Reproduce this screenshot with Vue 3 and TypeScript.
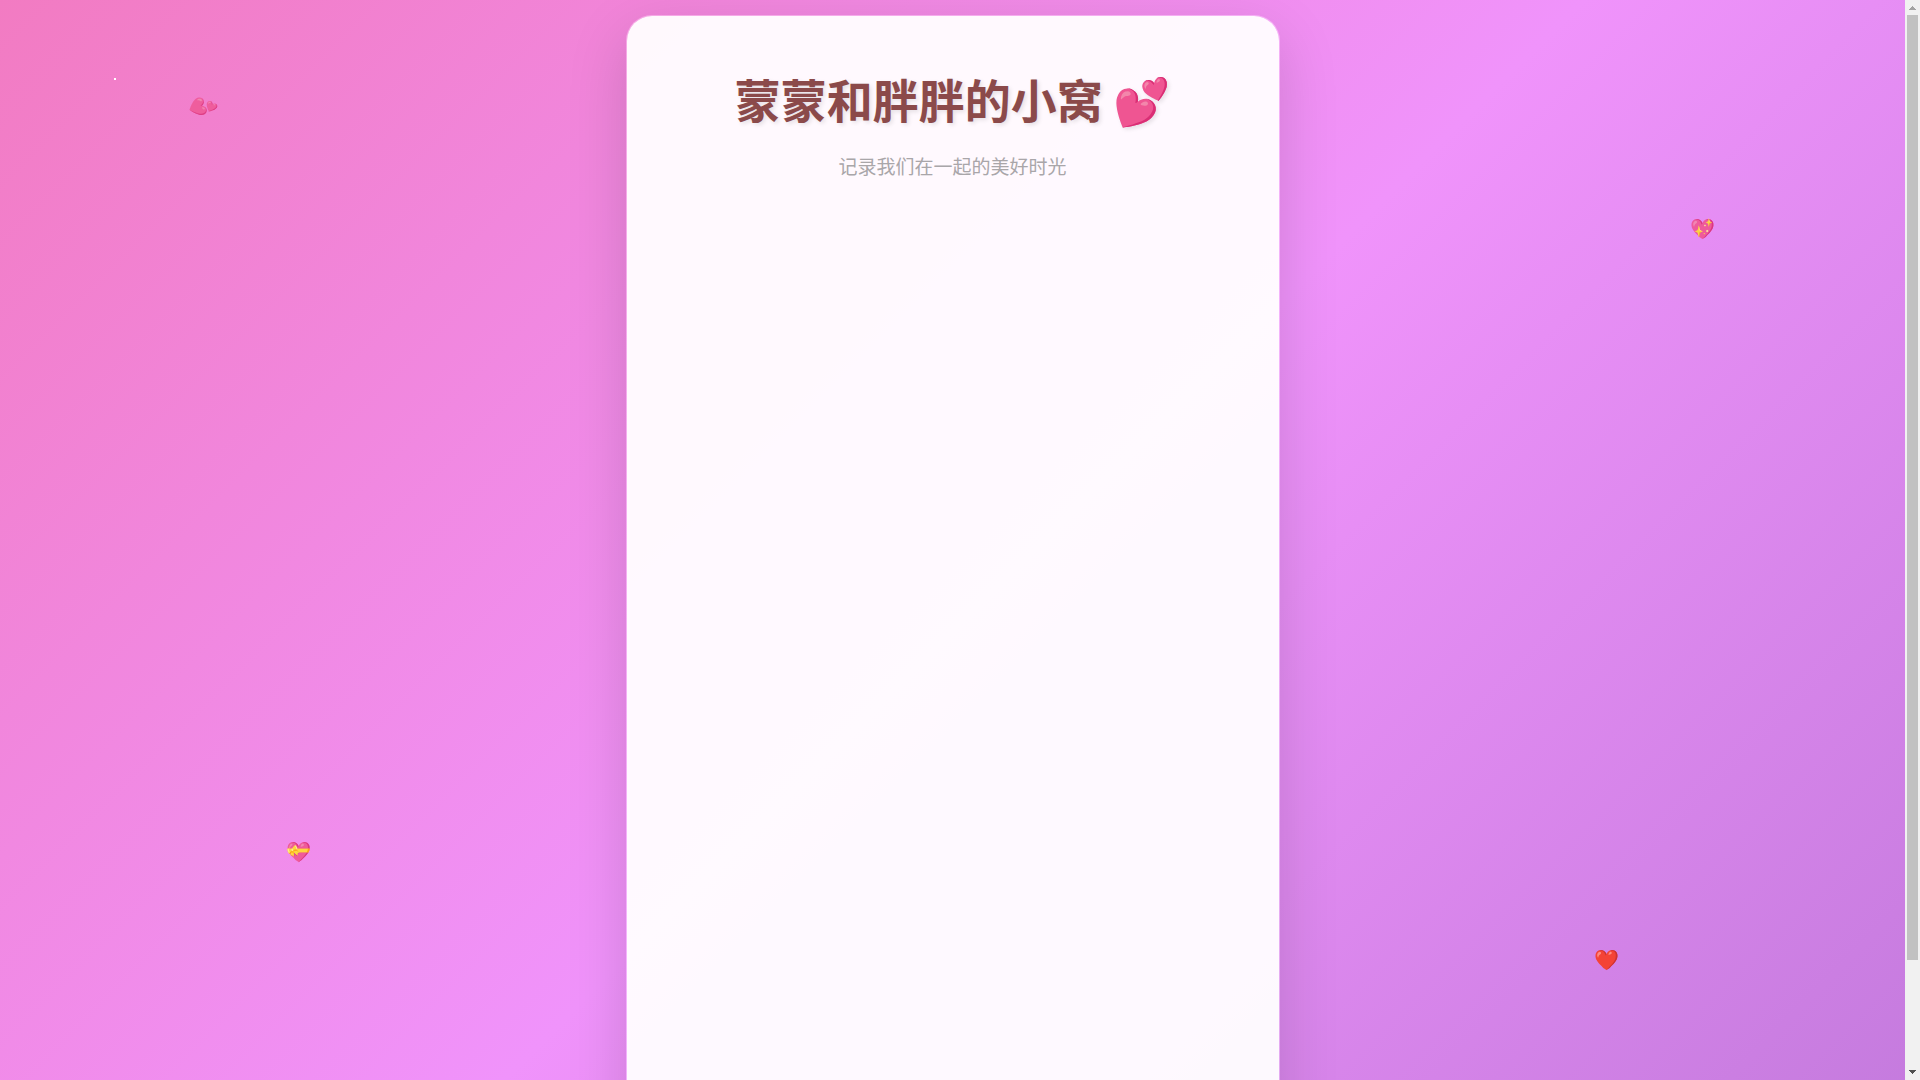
<script setup lang="ts">
interface FloatingHeart {
  symbol: string
  left: number
  top: number
  turn: number
  opacity: number
}

const hearts: FloatingHeart[] = [
  { symbol: '💕', left: 10, top: 8.7, turn: 41, opacity: 0.8 },
  { symbol: '💖', left: 88.7, top: 20, turn: 0, opacity: 0.9 },
  { symbol: '💝', left: 15, top: 77.7, turn: 0, opacity: 0.9 },
  { symbol: '❤️', left: 83.7, top: 87.7, turn: 0, opacity: 1 },
]
</script>

<template>
  <div class="viewport">
    <div class="scene">
      <main class="card">
        <header class="header">
          <h1 class="title">蒙蒙和胖胖的小窝 💕</h1>
          <p class="subtitle">记录我们在一起的美好时光</p>
        </header>
      </main>
      <div class="decor" aria-hidden="true">
        <span class="spark"></span>
        <span
          v-for="heart in hearts"
          :key="heart.symbol"
          class="heart"
          :style="{
            left: heart.left + '%',
            top: heart.top + '%',
            opacity: heart.opacity,
            transform: `rotate(${heart.turn}deg)`,
          }"
        >{{ heart.symbol }}</span>
      </div>
    </div>
    <div class="scrollbar" aria-hidden="true">
      <svg class="arrow" viewBox="0 0 15 15" shape-rendering="crispEdges">
        <path d="M7 6h1v1h1v1h1v1h1v1H4V9h1V8h1V7h1z" fill="#a3a3a3" />
      </svg>
      <div class="track"><div class="thumb"></div></div>
      <svg class="arrow" viewBox="0 0 15 15" shape-rendering="crispEdges">
        <path d="M4 5h7v1h-1v1H9v1H8v1H7V8H6V7H5V6H4z" fill="#505050" />
      </svg>
    </div>
  </div>
</template>

<style>
body {
  margin: 0;
}
</style>

<style scoped>
.viewport {
  position: relative;
  display: flex;
  height: 100vh;
  overflow: hidden;
  font-family: 'Noto Sans CJK SC', sans-serif;
}

.scene {
  flex: 1;
  min-width: 0;
  height: 111vh;
  padding: 15px 16px;
  box-sizing: border-box;
  background: linear-gradient(135deg, #f27bc2 0%, #f093fb 51%, #c279dc 100%);
}

.card {
  max-width: 654px;
  height: 100%;
  margin: 0 auto;
  padding: 46px 32px;
  box-sizing: border-box;
  border: 1px solid rgba(255, 255, 255, 0.3);
  border-radius: 26px;
  background: rgba(255, 255, 255, 0.95);
  background-clip: padding-box;
  box-shadow: 0 20px 60px rgba(0, 0, 0, 0.15);
}

.header {
  text-align: center;
}

.title {
  margin: 0 0 16px;
  color: #8b4a4a;
  font-size: 46px;
  font-weight: 700;
  line-height: 72px;
  text-shadow: 2px 2px 4px rgba(0, 0, 0, 0.1);
}

.subtitle {
  margin: 0;
  color: #a9a6a9;
  font-size: 19px;
  line-height: 32px;
}

.decor {
  position: absolute;
  inset: 0 15px 0 0;
  pointer-events: none;
}

.heart {
  position: absolute;
  font-size: 20px;
  line-height: 24px;
}

.spark {
  position: absolute;
  left: 6%;
  top: 78px;
  width: 2px;
  height: 2px;
  background: #fff;
}

.scrollbar {
  display: flex;
  flex-direction: column;
  width: 15px;
  height: 100%;
  background: #f1f1f1;
}

.arrow {
  width: 15px;
  height: 15px;
}

.track {
  flex: 1;
  padding: 0 2px;
}

.thumb {
  height: 90%;
  background: #c1c1c1;
}
</style>
